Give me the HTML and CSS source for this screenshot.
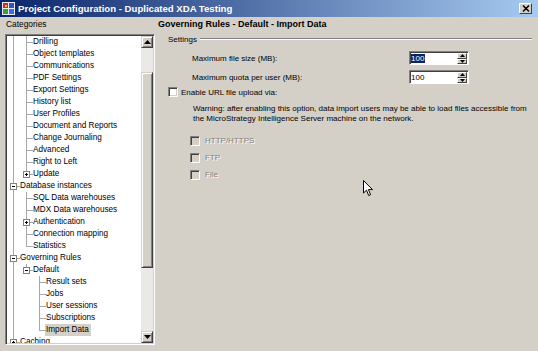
FILE: index.html
```html
<!DOCTYPE html>
<html>
<head>
<meta charset="utf-8">
<link rel="stylesheet" href="styles.css">
</head>
<body>
<div class="window">
  <div class="titlebar">
    <svg class="appicon" viewBox="0 0 13 13">
      <rect x="0" y="0" width="13" height="13" fill="#e8e8f0"/>
      <rect x="1" y="1" width="5" height="5" fill="#d8281c"/>
      <rect x="7" y="1" width="5" height="5" fill="#2a56c8"/>
      <rect x="1" y="7" width="5" height="5" fill="#2aa83c"/>
      <rect x="7" y="7" width="5" height="5" fill="#3a6ee0"/>
      <rect x="3" y="3" width="2" height="2" fill="#f7c020"/>
    </svg>
    <span class="title">Project Configuration - Duplicated XDA Testing</span>
    <span class="close"><svg viewBox="0 0 8 7" width="8" height="7"><path d="M1 0.5 L7 6.5 M7 0.5 L1 6.5" stroke="#000" stroke-width="1.5"/></svg></span>
  </div>
  <div class="main">
    <div class="left">
      <div class="cat-label">Categories</div>
      <div class="treebox">
        <div class="tree">
          <div class="row"><i class="c p"></i><i class="c t"></i><span class="lbl">Drilling</span></div>
          <div class="row"><i class="c p"></i><i class="c t"></i><span class="lbl">Object templates</span></div>
          <div class="row"><i class="c p"></i><i class="c t"></i><span class="lbl">Communications</span></div>
          <div class="row"><i class="c p"></i><i class="c t"></i><span class="lbl">PDF Settings</span></div>
          <div class="row"><i class="c p"></i><i class="c t"></i><span class="lbl">Export Settings</span></div>
          <div class="row"><i class="c p"></i><i class="c t"></i><span class="lbl">History list</span></div>
          <div class="row"><i class="c p"></i><i class="c t"></i><span class="lbl">User Profiles</span></div>
          <div class="row"><i class="c p"></i><i class="c t"></i><span class="lbl">Document and Reports</span></div>
          <div class="row"><i class="c p"></i><i class="c t"></i><span class="lbl">Change Journaling</span></div>
          <div class="row"><i class="c p"></i><i class="c t"></i><span class="lbl">Advanced</span></div>
          <div class="row"><i class="c p"></i><i class="c t"></i><span class="lbl">Right to Left</span></div>
          <div class="row"><i class="c p"></i><i class="c e"><b class="box plus"></b></i><span class="lbl">Update</span></div>
          <div class="row"><i class="c t"><b class="box"></b></i><span class="lbl">Database instances</span></div>
          <div class="row"><i class="c p"></i><i class="c t"></i><span class="lbl">SQL Data warehouses</span></div>
          <div class="row"><i class="c p"></i><i class="c t"></i><span class="lbl">MDX Data warehouses</span></div>
          <div class="row"><i class="c p"></i><i class="c t"><b class="box plus"></b></i><span class="lbl">Authentication</span></div>
          <div class="row"><i class="c p"></i><i class="c t"></i><span class="lbl">Connection mapping</span></div>
          <div class="row"><i class="c p"></i><i class="c e"></i><span class="lbl">Statistics</span></div>
          <div class="row"><i class="c t"><b class="box"></b></i><span class="lbl">Governing Rules</span></div>
          <div class="row"><i class="c p"></i><i class="c e"><b class="box"></b></i><span class="lbl">Default</span></div>
          <div class="row"><i class="c p"></i><i class="c"></i><i class="c t"></i><span class="lbl">Result sets</span></div>
          <div class="row"><i class="c p"></i><i class="c"></i><i class="c t"></i><span class="lbl">Jobs</span></div>
          <div class="row"><i class="c p"></i><i class="c"></i><i class="c t"></i><span class="lbl">User sessions</span></div>
          <div class="row"><i class="c p"></i><i class="c"></i><i class="c t"></i><span class="lbl">Subscriptions</span></div>
          <div class="row"><i class="c p"></i><i class="c"></i><i class="c e"></i><span class="lbl sel">Import Data</span></div>
          <div class="row last"><i class="c e"><b class="box plus"></b></i><span class="lbl">Caching</span></div>
        </div>
        <div class="vscroll">
          <div class="sbtn"><svg viewBox="0 0 7 4" width="7" height="4"><path d="M3.5 0 L7 4 L0 4 Z" fill="#000"/></svg></div>
          <div class="track">
            <div class="gap-top"></div>
            <div class="thumb"></div>
            <div class="gap-bottom"></div>
          </div>
          <div class="sbtn"><svg viewBox="0 0 7 4" width="7" height="4"><path d="M0 0 L7 0 L3.5 4 Z" fill="#000"/></svg></div>
        </div>
      </div>
    </div>
    <div class="right">
      <div class="heading">Governing Rules - Default - Import Data</div>
      <div class="legend"><span>Settings</span><span class="etch"></span></div>
      <div class="field">
        <span class="flabel">Maximum file size (MB):</span>
        <span class="spin"><span class="spin-text"><span class="hl">100</span></span><span class="spin-btns"><span class="sb"><svg viewBox="0 0 5 3" width="5" height="3"><path d="M2.5 0 L5 3 L0 3 Z" fill="#000"/></svg></span><span class="sb"><svg viewBox="0 0 5 3" width="5" height="3"><path d="M0 0 L5 0 L2.5 3 Z" fill="#000"/></svg></span></span></span>
      </div>
      <div class="field">
        <span class="flabel">Maximum quota per user (MB):</span>
        <span class="spin"><span class="spin-text">100</span><span class="spin-btns"><span class="sb"><svg viewBox="0 0 5 3" width="5" height="3"><path d="M2.5 0 L5 3 L0 3 Z" fill="#000"/></svg></span><span class="sb"><svg viewBox="0 0 5 3" width="5" height="3"><path d="M0 0 L5 0 L2.5 3 Z" fill="#000"/></svg></span></span></span>
      </div>
      <div class="check-row"><span class="cb"></span><span>Enable URL file upload via:</span></div>
      <div class="warning">Warning: after enabling this option, data import users may be able to load files accessible from<br>the MicroStrategy Intelligence Server machine on the network.</div>
      <div class="dis-list">
        <div class="dis-row"><span class="cb off"></span><span class="dtext">HTTP/HTTPS</span></div>
        <div class="dis-row"><span class="cb off"></span><span class="dtext">FTP</span></div>
        <div class="dis-row"><span class="cb off"></span><span class="dtext">File</span></div>
      </div>
    </div>
  </div>
  <svg class="cursor" viewBox="0 0 11 17" width="11" height="17"><path d="M0.5 0.5 L0.5 13 L3.5 10.2 L5.7 15.5 L7.6 14.7 L5.4 9.6 L9.5 9.6 Z" fill="#fff" stroke="#000" stroke-width="1"/></svg>
</div>
</body>
</html>
```
FILE: styles.css
```css
* { box-sizing: border-box; }
html, body { margin: 0; padding: 0; }
body {
  width: 538px;
  height: 351px;
  overflow: hidden;
  background: #d4d0c8;
  font-family: "Liberation Sans", Arial, sans-serif;
  font-size: 8px;
  color: #000;
}
.window {
  position: relative;
  display: flex;
  flex-direction: column;
  height: 351px;
}
.titlebar {
  height: 17px;
  flex: none;
  display: flex;
  align-items: center;
  background: linear-gradient(to right, #0a246a, #a6caf0);
  color: #fff;
  font-weight: bold;
  font-size: 9.6px;
  padding: 0 6px 0 2px;
}
.appicon { width: 13px; height: 13px; margin-right: 3px; flex: none; }
.title { flex: 1; white-space: nowrap; }
.close {
  width: 13px;
  height: 11px;
  background: #d4d0c8;
  border: 1px solid;
  border-color: #fff #404040 #404040 #fff;
  display: flex;
  align-items: center;
  justify-content: center;
}
.main { flex: 1; display: flex; min-height: 0; }
.left {
  width: 158px;
  flex: none;
  padding-left: 5px;
  display: flex;
  flex-direction: column;
}
.cat-label { height: 17px; line-height: 14px; padding-left: 1px; font-size: 8.4px; }
.treebox {
  width: 150px;
  height: 311px;
  border: 1px solid;
  border-color: #808080 #fff #fff #808080;
  display: flex;
  background: #fff;
  padding: 1px;
  box-shadow: inset 1px 1px 0 #404040, inset -1px -1px 0 #d4d0c8;
}
.tree { flex: 1; overflow: hidden; font-size: 8.2px; }
.row { display: flex; height: 12px; line-height: 12px; white-space: nowrap; }
.row.last { height: 7px; overflow: hidden; line-height: 11px; }
.c { width: 13px; height: 12px; position: relative; flex: none; }
.c.p::before, .c.t::before, .c.e::before {
  content: "";
  position: absolute;
  left: 6px;
  top: 0;
  height: 12px;
  border-left: 1px solid #a8a8a8;
}
.c.e::before { height: 7px; }
.c.t::after, .c.e::after {
  content: "";
  position: absolute;
  left: 7px;
  right: 0;
  top: 6px;
  border-top: 1px solid #a8a8a8;
}
.box {
  position: absolute;
  left: 3px;
  top: 3px;
  width: 7px;
  height: 7px;
  background: #fff;
  border: 1px solid #808080;
  z-index: 1;
}
.box::before {
  content: "";
  position: absolute;
  left: 1px;
  top: 2px;
  width: 3px;
  height: 1px;
  background: #000;
}
.box.plus::after {
  content: "";
  position: absolute;
  left: 2px;
  top: 1px;
  width: 1px;
  height: 3px;
  background: #000;
}
.lbl { padding: 0 2px 0 1px; margin-left: -1px; }
.lbl.sel { background: #d4d0c8; }
.vscroll {
  width: 12px;
  flex: none;
  display: flex;
  flex-direction: column;
}
.sbtn {
  height: 12px;
  flex: none;
  background: #d4d0c8;
  border: 1px solid;
  border-color: #d4d0c8 #404040 #404040 #d4d0c8;
  box-shadow: inset 1px 1px 0 #fff, inset -1px -1px 0 #808080;
  display: flex;
  align-items: center;
  justify-content: center;
}
.track { flex: 1; display: flex; flex-direction: column; background: #ebe9e5; }
.gap-top { height: 24px; }
.thumb {
  height: 196px;
  background: #d4d0c8;
  border: 1px solid;
  border-color: #d4d0c8 #404040 #404040 #d4d0c8;
  box-shadow: inset 1px 1px 0 #fff, inset -1px -1px 0 #808080;
}
.gap-bottom { flex: 1; }
.right { flex: 1; padding-right: 6px; }
.heading { height: 14px; line-height: 14px; font-weight: bold; font-size: 9px; white-space: nowrap; }
.legend {
  height: 16px;
  display: flex;
  align-items: center;
  padding-left: 10px;
}
.etch {
  flex: 1;
  margin-left: 3px;
  height: 2px;
  border-top: 1px solid #808080;
  border-bottom: 1px solid #fff;
}
.field {
  display: flex;
  align-items: center;
  height: 14px;
  margin-top: 4px;
  padding-left: 34px;
}
.field + .field { margin-top: 5px; }
.flabel { width: 217px; flex: none; }
.spin {
  width: 60px;
  height: 14px;
  display: flex;
  background: #fff;
  border: 1px solid;
  border-color: #808080 #fff #fff #808080;
  box-shadow: inset 1px 1px 0 #404040;
  padding: 1px 1px 0 1px;
}
.spin-text { flex: 1; line-height: 11px; }
.hl { background: #0a246a; color: #fff; padding-right: 1px; }
.spin-btns { width: 10px; display: flex; flex-direction: column; }
.sb {
  flex: 1;
  background: #d4d0c8;
  border: 1px solid;
  border-color: #fff #404040 #404040 #fff;
  display: flex;
  align-items: center;
  justify-content: center;
}
.check-row {
  display: flex;
  align-items: center;
  height: 12px;
  margin-top: 2px;
  padding-left: 10px;
  gap: 3px;
}
.cb {
  width: 10px;
  height: 10px;
  flex: none;
  background: #fff;
  border: 1px solid;
  border-color: #808080 #fff #fff #808080;
  box-shadow: inset 1px 1px 0 #404040, inset -1px -1px 0 #d4d0c8;
}
.cb.off { background: #d4d0c8; }
.warning {
  margin-top: 6px;
  padding-left: 35px;
  line-height: 10px;
  white-space: nowrap;
}
.dis-list { margin-top: 8px; padding-left: 32px; }
.dis-row { display: flex; align-items: center; height: 17px; gap: 5px; }
.dtext { color: #808080; text-shadow: 1px 1px 0 #fff; }
.cursor { position: absolute; left: 363px; top: 180px; }
```
